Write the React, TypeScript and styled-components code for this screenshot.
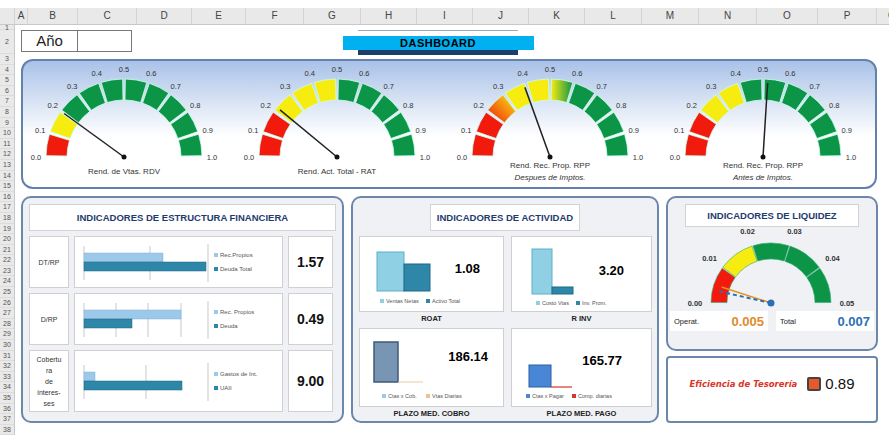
import * as React from 'react';
import styled, { createGlobalStyle } from 'styled-components';

const Global = createGlobalStyle`
  body { margin: 0; background: #fff; font-family: "Liberation Sans", Arial, sans-serif; }
`;

const COLS: [string, number][] = [
  ['A', 12], ['B', 49], ['C', 58], ['D', 54], ['E', 53], ['F', 57], ['G', 56], ['H', 55], ['I', 55],
  ['J', 55], ['K', 55], ['L', 56], ['M', 56], ['N', 57], ['O', 60], ['P', 58], ['Q', 30],
];

const Sheet = styled.div`
  width: 889px;
  height: 439px;
  overflow: hidden;
  padding-top: 8px;
  box-sizing: border-box;
`;

const ColHeader = styled.div`
  display: flex;
  height: 16px;
  background: #e9e9e9;
  border-bottom: 1px solid #c8c8c8;
`;

const ColCell = styled.div<{ $w: number }>`
  width: ${(p) => p.$w}px;
  flex: none;
  border-right: 1px solid #d4d4d4;
  font-size: 10px;
  color: #444;
  text-align: center;
  line-height: 16px;
`;

const Body = styled.div`
  display: flex;
`;

const RowNums = styled.div`
  width: 14px;
  flex: none;
  background: #e9e9e9;
  border-right: 1px solid #c8c8c8;
`;

const RowNum = styled.div<{ $h: number }>`
  height: ${(p) => p.$h}px;
  font-size: 7px;
  color: #555;
  text-align: center;
  line-height: ${(p) => p.$h}px;
  border-bottom: 1px solid #dcdcdc;
  box-sizing: border-box;
`;

const Content = styled.div`
  flex: 1;
  padding: 5px 0 0 6px;
  display: flex;
  flex-direction: column;
`;

const TopRow = styled.div`
  display: flex;
  height: 28px;
  align-items: flex-start;
`;

const YearBox = styled.div`
  display: flex;
  width: 111px;
  height: 22px;
  border: 1.5px solid #777;
  box-sizing: border-box;
`;

const YearLabel = styled.div`
  width: 55px;
  border-right: 1.5px solid #777;
  font-size: 15px;
  color: #222;
  text-align: center;
  line-height: 19px;
`;

const TitleWrap = styled.div`
  margin-left: 226px;
  display: flex;
  flex-direction: column;
  align-items: center;
  border-top: 1px solid #9ab;
  width: 160px;
  padding-top: 5px;
`;

const TitleBar = styled.div`
  width: 191px;
  height: 14px;
  background: #00b0f0;
  color: #000;
  font-weight: bold;
  font-size: 11px;
  text-align: center;
  line-height: 14px;
  letter-spacing: 0.5px;
`;

const TitleUnder = styled.div`
  width: 160px;
  height: 5px;
  background: #1f3d6b;
`;

const GaugePanel = styled.div`
  margin-top: 1px;
  width: 856px;
  height: 130px;
  border: 2px solid #6381ab;
  border-radius: 12px;
  box-sizing: border-box;
  background: linear-gradient(#a9c2e8 0%, #dce6f5 35%, #ffffff 60%);
  display: grid;
  grid-template-columns: repeat(4, 200px);
  column-gap: 13px;
  padding-left: 1px;
`;

const GaugeBox = styled.div`
  display: flex;
  flex-direction: column;
  align-items: center;
`;

const Caption = styled.div<{ $single?: boolean }>`
  font-size: 8px;
  color: #333;
  text-align: center;
  line-height: 12px;
  margin-top: ${(p) => (p.$single ? 5 : -1)}px;
`;

const Bottom = styled.div`
  display: flex;
  margin-top: 7px;
  gap: 7px;
`;

const Panel = styled.div<{ $w: number; $h: number }>`
  width: ${(p) => p.$w}px;
  height: ${(p) => p.$h}px;
  border: 2px solid #6d87ab;
  border-radius: 10px;
  box-sizing: border-box;
  background: #eff1f4;
  padding: 6px;
  display: flex;
  flex-direction: column;
`;

const PanelTitle = styled.div<{ $w?: number }>`
  align-self: center;
  width: ${(p) => (p.$w ? `${p.$w}px` : '100%')};
  background: #fff;
  border: 1px solid #d3d3d3;
  color: #1f3b6e;
  font-weight: bold;
  font-size: 9.5px;
  text-align: center;
  padding: 7px 0;
  box-sizing: border-box;
`;

const FinRow = styled.div<{ $h: number }>`
  display: grid;
  grid-template-columns: 40px 209px 45px;
  gap: 5px;
  height: ${(p) => p.$h}px;
  margin-top: 5px;
`;

const Cell = styled.div`
  background: #fff;
  border: 1.5px solid #d0d0d0;
  box-sizing: border-box;
  display: flex;
  align-items: center;
  justify-content: center;
`;

const SmallLabel = styled.div`
  font-size: 7px;
  color: #333;
  text-align: center;
  line-height: 11px;
`;

const BigValue = styled.div`
  font-size: 14px;
  font-weight: bold;
  color: #111;
`;

const ActGrid = styled.div`
  display: grid;
  grid-template-columns: 145px 141px;
  column-gap: 7px;
  margin-top: 5px;
`;

const ActCard = styled.div`
  display: flex;
  flex-direction: column;
  align-items: center;
`;

const ActBox = styled.div<{ $h: number }>`
  width: 100%;
  height: ${(p) => p.$h}px;
  background: #fff;
  border: 1.5px solid #cfcfcf;
  box-sizing: border-box;
  overflow: hidden;
`;

const ActLabel = styled.div`
  font-size: 7.5px;
  font-weight: bold;
  color: #222;
  height: 16px;
  line-height: 14px;
`;

const RightCol = styled.div`
  display: flex;
  flex-direction: column;
  gap: 5px;
`;

const LiqValues = styled.div`
  display: flex;
  gap: 8px;
  margin: 2px -4px 0;
`;

const LiqBox = styled.div`
  flex: 1;
  background: #fff;
  display: flex;
  align-items: center;
  justify-content: space-between;
  padding: 0 4px;
  height: 20px;
`;

const LiqName = styled.span`
  font-size: 7.5px;
  color: #222;
`;

const LiqNum = styled.span<{ $c: string }>`
  font-size: 13px;
  font-weight: bold;
  color: ${(p) => p.$c};
`;

const TesoBox = styled.div`
  width: 212px;
  height: 67px;
  border: 2px solid #6d87ab;
  border-radius: 4px;
  box-sizing: border-box;
  background: #fff;
  display: flex;
  align-items: center;
  justify-content: center;
  gap: 10px;
  padding-bottom: 12px;
`;

const TesoText = styled.span`
  font-family: "DejaVu Sans", sans-serif;
  font-style: italic;
  font-weight: bold;
  font-size: 8.5px;
  color: #d9352a;
`;

const TesoSquare = styled.span`
  width: 10px;
  height: 10px;
  background: #e8582a;
  border: 2px solid #444;
  border-radius: 2px;
`;

const TesoNum = styled.span`
  font-size: 15px;
  color: #111;
  margin-left: -6px;
`;

const pt = (cx: number, cy: number, r: number, a: number) => {
  const rad = (a * Math.PI) / 180;
  return [cx + r * Math.cos(rad), cy - r * Math.sin(rad)];
};

const seg = (cx: number, cy: number, R: number, r: number, a0: number, a1: number) => {
  const [x0, y0] = pt(cx, cy, R, a0);
  const [x1, y1] = pt(cx, cy, R, a1);
  const [x2, y2] = pt(cx, cy, r, a1);
  const [x3, y3] = pt(cx, cy, r, a0);
  return `M${x0} ${y0} A${R} ${R} 0 0 1 ${x1} ${y1} L${x2} ${y2} A${r} ${r} 0 0 0 ${x3} ${y3} Z`;
};

const R_ = '#f21a0c';
const Y_ = '#f7ec10';
const G_ = '#0c9447';

const Gauge = ({ colors, value, id }: { colors: string[]; value: number; id: string }) => {
  const cx = 100, cy = 96, R = 78, r = 57;
  const n = colors.length;
  const step = 180 / n;
  const na = 180 - value * 180;
  const [nx, ny] = pt(cx, cy, R - 4, na);
  return (
    <svg width={200} height={100}>
      <defs>
        <linearGradient id={`${id}o`} x1="0" y1="1" x2="1" y2="0">
          <stop offset="0" stopColor="#f21a0c" />
          <stop offset="1" stopColor="#f7ec10" />
        </linearGradient>
        <linearGradient id={`${id}g`} x1="0" y1="0" x2="1" y2="0">
          <stop offset="0" stopColor="#f7ec10" />
          <stop offset="1" stopColor="#0c9447" />
        </linearGradient>
      </defs>
      {colors.map((c, i) => {
        const a0 = 180 - i * step - 1;
        const a1 = 180 - (i + 1) * step + 1;
        const fill = c === 'o' ? `url(#${id}o)` : c === 'g' ? `url(#${id}g)` : c;
        return <path key={i} d={seg(cx, cy, R, r, a0, a1)} fill={fill} stroke="#cfe" strokeWidth={0.8} />;
      })}
      {Array.from({ length: 11 }).map((_, i) => {
        const [x, y] = pt(cx, cy, R + 10, 180 - i * 18);
        return (
          <text key={i} x={x} y={y + 3} fontSize={7.5} textAnchor="middle" fill="#333" fontFamily="Liberation Sans">
            {(i / 10).toFixed(1)}
          </text>
        );
      })}
      <line x1={cx} y1={cy} x2={nx} y2={ny} stroke="#222" strokeWidth={1.5} />
      <circle cx={cx} cy={cy} r={2.5} fill="#111" />
    </svg>
  );
};

const LiqGauge = () => {
  const cx = 97, cy = 76, R = 60, r = 44;
  const cols = [R_, Y_, G_, G_, G_];
  const [tx, ty] = pt(cx, cy, R - 6, 180 - 0.07 * 180);
  const [ox, oy] = pt(cx, cy, R - 8, 180 - 0.1 * 180);
  return (
    <svg width={196} height={82}>
      {cols.map((c, i) => (
        <path key={i} d={seg(cx, cy, R, r, 180 - i * 36 - 0.5, 180 - (i + 1) * 36 + 0.5)} fill={c} stroke="#3a7" strokeWidth={0.6} />
      ))}
      {['0.00', '0.01', '0.02', '0.03', '0.04', '0.05'].map((l, i) => {
        const [x, y] = pt(cx, cy, R + 16, 180 - i * 36);
        return (
          <text key={l} x={x} y={y + 3} fontSize={7.5} fontWeight="bold" textAnchor="middle" fill="#333" fontFamily="Liberation Sans">
            {l}
          </text>
        );
      })}
      <line x1={cx} y1={cy} x2={ox} y2={oy} stroke="#e8901f" strokeWidth={1.5} />
      <line x1={cx} y1={cy} x2={tx} y2={ty} stroke="#2c6fb5" strokeWidth={2} strokeDasharray="4 3" />
      <circle cx={cx} cy={cy} r={3.5} fill="#2c6fb5" />
    </svg>
  );
};

const LIGHT = '#9cc8ea';
const TEAL = '#2e86a8';

const HBars = ({ a, b, grid, la, lb }: { a: number; b: number; grid: number[]; la: string; lb: string }) => (
  <svg width={206} height={49}>
    {grid.map((g) => (
      <line key={g} x1={g} y1={8} x2={g} y2={42} stroke="#bbb" strokeWidth={0.8} />
    ))}
    <line x1={132} y1={6} x2={132} y2={44} stroke="#bbb" strokeWidth={0.8} />
    <rect x={8} y={15} width={a} height={9} fill={LIGHT} stroke="#7fb0d8" strokeWidth={0.5} />
    <rect x={8} y={24} width={b} height={9} fill={TEAL} stroke="#1e6a88" strokeWidth={0.5} />
    <rect x={138} y={15} width={4} height={4} fill={LIGHT} />
    <text x={144} y={19} fontSize={6} fill="#555" fontFamily="Liberation Sans">{la}</text>
    <rect x={138} y={29} width={4} height={4} fill={TEAL} />
    <text x={144} y={33} fontSize={6} fill="#555" fontFamily="Liberation Sans">{lb}</text>
  </svg>
);

const Legend = ({ x, c, t }: { x: number; c: string; t: string }) => (
  <>
    <rect x={x} y={0} width={4} height={4} fill={c} />
    <text x={x + 6} y={4} fontSize={5.5} fill="#555" fontFamily="Liberation Sans">{t}</text>
  </>
);

export default function App() {
  const rowHeights = [5, 24, ...Array.from({ length: 36 }, () => 10.6)];
  return (
    <Sheet>
      <Global />
      <ColHeader>
        <ColCell $w={14} />
        {COLS.map(([l, w]) => (
          <ColCell key={l} $w={w}>{l}</ColCell>
        ))}
      </ColHeader>
      <Body>
        <RowNums>
          {rowHeights.map((h, i) => (
            <RowNum key={i} $h={h}>{i + 1}</RowNum>
          ))}
        </RowNums>
        <Content>
          <TopRow>
            <YearBox>
              <YearLabel>Año</YearLabel>
            </YearBox>
            <TitleWrap>
              <TitleBar>DASHBOARD</TitleBar>
              <TitleUnder />
            </TitleWrap>
          </TopRow>
          <GaugePanel>
            <GaugeBox>
              <Gauge id="g1" colors={[R_, Y_, G_, G_, G_, G_, G_, G_, G_, G_]} value={0.2} />
              <Caption $single>Rend. de Vtas. RDV</Caption>
            </GaugeBox>
            <GaugeBox>
              <Gauge id="g2" colors={[R_, R_, Y_, Y_, Y_, G_, G_, G_, G_, G_]} value={0.22} />
              <Caption $single>Rend. Act. Total - RAT</Caption>
            </GaugeBox>
            <GaugeBox>
              <Gauge id="g3" colors={[R_, R_, 'o', Y_, Y_, 'g', G_, G_, G_, G_]} value={0.39} />
              <Caption>Rend. Rec. Prop. RPP<br /><i>Despues de Imptos.</i></Caption>
            </GaugeBox>
            <GaugeBox>
              <Gauge id="g4" colors={[R_, R_, Y_, Y_, G_, G_, G_, G_, G_, G_]} value={0.52} />
              <Caption>Rend. Rec. Prop. RPP<br /><i>Antes de Imptos.</i></Caption>
            </GaugeBox>
          </GaugePanel>
          <Bottom>
            <Panel $w={323} $h={227}>
              <PanelTitle>INDICADORES DE ESTRUCTURA FINANCIERA</PanelTitle>
              <FinRow $h={52}>
                <Cell><SmallLabel>DT/RP</SmallLabel></Cell>
                <Cell><HBars a={79} b={122} grid={[8, 74]} la="Rec.Propios" lb="Deuda Total" /></Cell>
                <Cell><BigValue>1.57</BigValue></Cell>
              </FinRow>
              <FinRow $h={52}>
                <Cell><SmallLabel>D/RP</SmallLabel></Cell>
                <Cell><HBars a={97} b={48} grid={[8, 40, 72, 105]} la="Rec. Propios" lb="Deuda" /></Cell>
                <Cell><BigValue>0.49</BigValue></Cell>
              </FinRow>
              <FinRow $h={62}>
                <Cell><SmallLabel>Cobertu<br />ra<br />de<br />interes-<br />ses</SmallLabel></Cell>
                <Cell><HBars a={11} b={98} grid={[8, 70]} la="Gastos de Int." lb="UAII" /></Cell>
                <Cell><BigValue>9.00</BigValue></Cell>
              </FinRow>
            </Panel>
            <Panel $w={308} $h={227}>
              <PanelTitle $w={150}>INDICADORES DE ACTIVIDAD</PanelTitle>
              <ActGrid>
                <ActCard>
                  <ActBox $h={76}>
                    <svg width={142} height={74}>
                      <rect x={17} y={15} width={27} height={39} fill="#8fd0e4" stroke="#5fb0c8" />
                      <rect x={44} y={27} width={26} height={27} fill={TEAL} stroke="#1e6a88" />
                      <text x={120} y={36} fontSize={13} fontWeight="bold" textAnchor="end" fontFamily="Liberation Sans">1.08</text>
                      <g transform="translate(20,62)">
                        <Legend x={0} c="#8fd0e4" t="Ventas Netas" />
                        <Legend x={46} c={TEAL} t="Activo Total" />
                      </g>
                    </svg>
                  </ActBox>
                  <ActLabel>ROAT</ActLabel>
                </ActCard>
                <ActCard>
                  <ActBox $h={76}>
                    <svg width={138} height={74}>
                      <rect x={20} y={12} width={20} height={45} fill="#8fd0e4" stroke="#5fb0c8" />
                      <rect x={40} y={50} width={21} height={7} fill={TEAL} stroke="#1e6a88" />
                      <text x={112} y={38} fontSize={13} fontWeight="bold" textAnchor="end" fontFamily="Liberation Sans">3.20</text>
                      <g transform="translate(24,64)">
                        <Legend x={0} c="#8fd0e4" t="Costo Vtas" />
                        <Legend x={40} c={TEAL} t="Inv. Prom." />
                      </g>
                    </svg>
                  </ActBox>
                  <ActLabel>R INV</ActLabel>
                </ActCard>
                <ActCard>
                  <ActBox $h={79}>
                    <svg width={142} height={76}>
                      <rect x={14} y={13} width={24} height={40} fill="#7895b3" stroke="#3f5a78" strokeWidth={1.5} />
                      <line x1={38} y1={53} x2={63} y2={53} stroke="#e8c9a8" />
                      <text x={128} y={32} fontSize={13} fontWeight="bold" textAnchor="end" fontFamily="Liberation Sans">186.14</text>
                      <g transform="translate(22,65)">
                        <Legend x={0} c="#9cc8ea" t="Ctas x Cob." />
                        <Legend x={44} c="#f0c090" t="Vtas Diarias" />
                      </g>
                    </svg>
                  </ActBox>
                  <ActLabel>PLAZO MED. COBRO</ActLabel>
                </ActCard>
                <ActCard>
                  <ActBox $h={79}>
                    <svg width={138} height={76}>
                      <rect x={17} y={36} width={22} height={22} fill="#4a86d6" stroke="#2a5ea6" />
                      <line x1={39} y1={58} x2={60} y2={58} stroke="#d0392b" strokeWidth={1.2} />
                      <text x={110} y={36} fontSize={13} fontWeight="bold" textAnchor="end" fontFamily="Liberation Sans">165.77</text>
                      <g transform="translate(14,65)">
                        <Legend x={0} c="#4a86d6" t="Ctas x Pagar" />
                        <Legend x={46} c="#d0392b" t="Comp. diarias" />
                      </g>
                    </svg>
                  </ActBox>
                  <ActLabel>PLAZO MED. PAGO</ActLabel>
                </ActCard>
              </ActGrid>
            </Panel>
            <RightCol>
              <Panel $w={212} $h={155}>
                <PanelTitle $w={174} style={{ padding: '5px 0' }}>INDICADORES DE LIQUIDEZ</PanelTitle>
                <LiqGauge />
                <LiqValues>
                  <LiqBox>
                    <LiqName>Operat.</LiqName>
                    <LiqNum $c="#e28a2b">0.005</LiqNum>
                  </LiqBox>
                  <LiqBox>
                    <LiqName>Total</LiqName>
                    <LiqNum $c="#2c6fb5">0.007</LiqNum>
                  </LiqBox>
                </LiqValues>
              </Panel>
              <TesoBox>
                <TesoText>Eficiencia de Tesorería</TesoText>
                <TesoSquare />
                <TesoNum>0.89</TesoNum>
              </TesoBox>
            </RightCol>
          </Bottom>
        </Content>
      </Body>
    </Sheet>
  );
}
